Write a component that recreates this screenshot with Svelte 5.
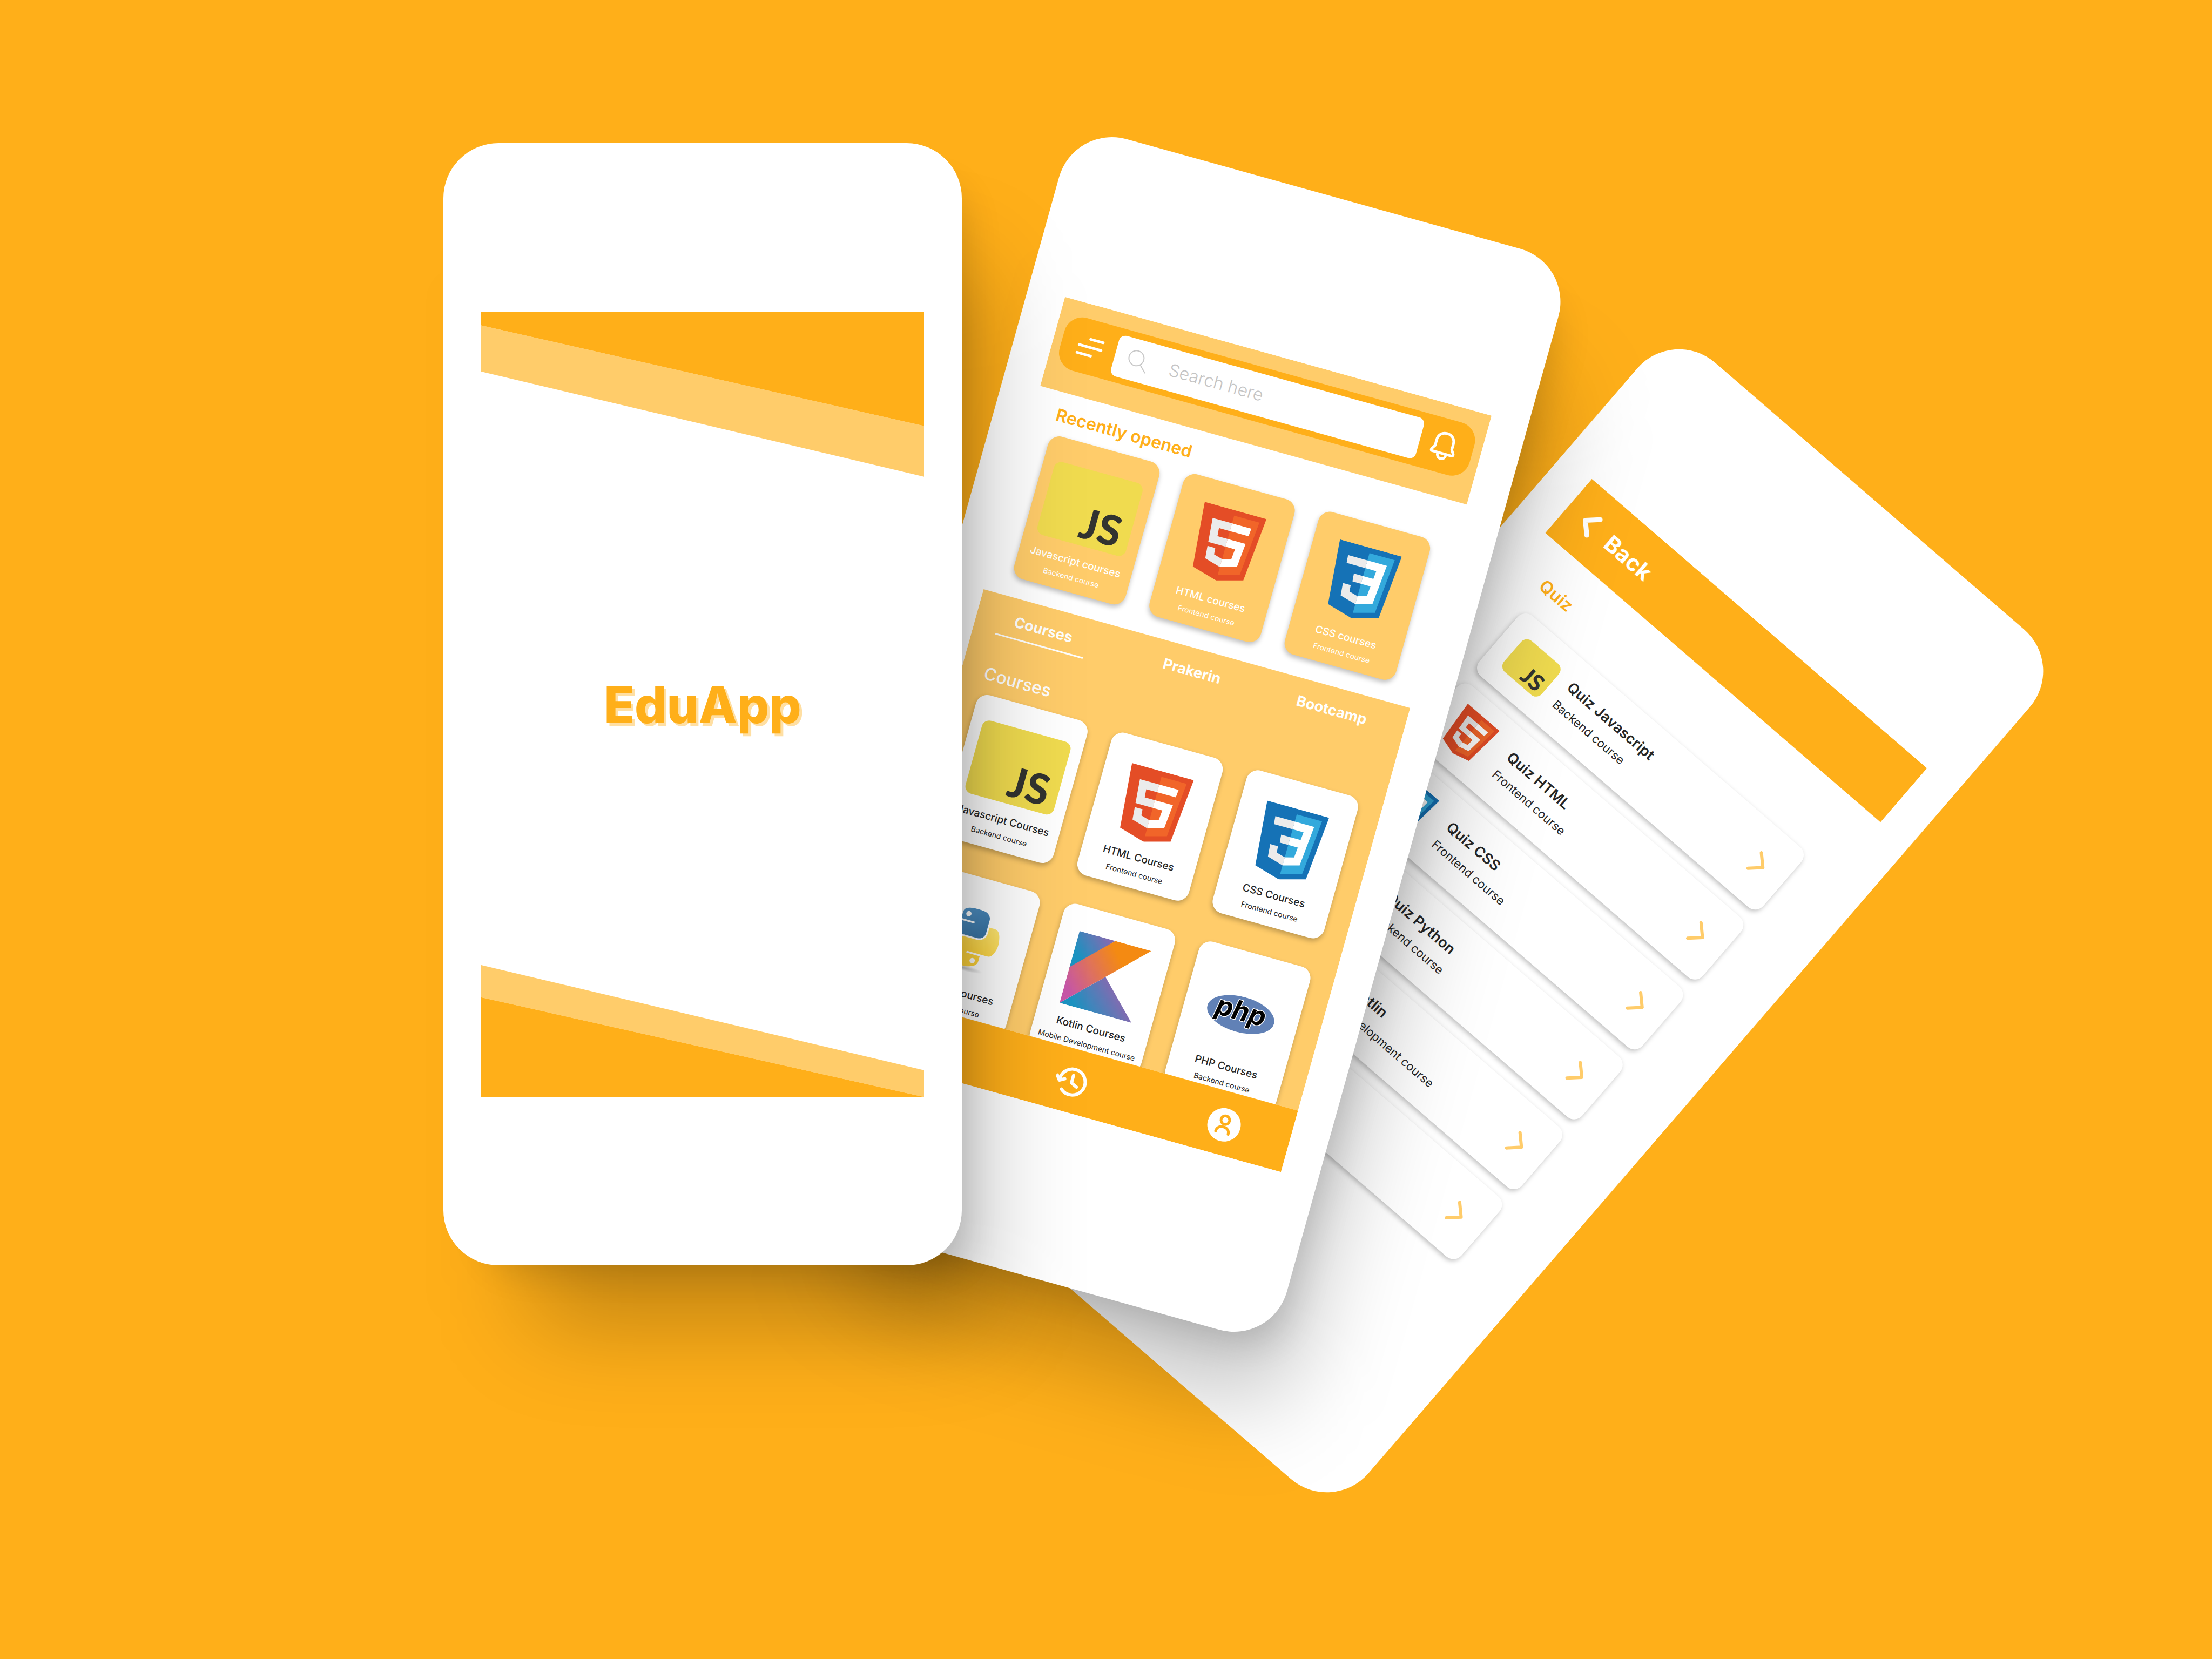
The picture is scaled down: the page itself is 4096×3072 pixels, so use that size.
<script>
  const recent = [
    { logo: 'js', title: 'Javascript courses', kind: 'Backend course' },
    { logo: 'html', title: 'HTML courses', kind: 'Frontend course' },
    { logo: 'css', title: 'CSS courses', kind: 'Frontend course' },
  ];

  const courses = [
    { logo: 'js', title: 'Javascript Courses', kind: 'Backend course' },
    { logo: 'html', title: 'HTML Courses', kind: 'Frontend course' },
    { logo: 'css', title: 'CSS Courses', kind: 'Frontend course' },
    { logo: 'python', title: 'Python Courses', kind: 'Backend course' },
    { logo: 'kotlin', title: 'Kotlin Courses', kind: 'Mobile Development course' },
    { logo: 'php', title: 'PHP Courses', kind: 'Backend course' },
  ];

  const quizzes = [
    { logo: 'js', title: 'Quiz Javascript', kind: 'Backend course' },
    { logo: 'html', title: 'Quiz HTML', kind: 'Frontend course' },
    { logo: 'css', title: 'Quiz CSS', kind: 'Frontend course' },
    { logo: 'python', title: 'Quiz Python', kind: 'Backend course' },
    { logo: 'kotlin', title: 'Quiz Kotlin', kind: 'Mobile Development course' },
    { logo: 'php', title: 'Quiz PHP', kind: 'Backend course' },
  ];

  const tabs = ['Courses', 'Prakerin', 'Bootcamp'];
  let activeTab = $state('Courses');
</script>

{#snippet logo(name)}
  {#if name === 'js'}
    <span class="logo js">JS</span>
  {:else if name === 'html'}
    <svg class="logo shield" viewBox="74 100 364 412" aria-hidden="true">
      <path fill="#e44d26" d="M107.6 470.9 74.6 100.6h362.8l-33.1 370.2L255.8 512z" />
      <path fill="#f16529" d="m256 480.5 120-33.3 28.3-316.3H256z" />
      <path fill="#ebebeb" d="M256 268.2h-60.1l-4.1-46.5H256v-45.4H142.1l1.1 12.2 11.2 125.1H256zM256 386.2l-.2.1-50.6-13.7-3.2-36.2h-45.6l6.4 71.3 93 25.8.2-.1z" />
      <path fill="#fff" d="M255.8 268.2v45.4h55.9l-5.3 58.9-50.6 13.7v47.2l93.1-25.8.7-7.6 10.7-119.6 1.1-12.2H255.8zM255.8 176.3v45.4h109.7l.9-10.2 2.1-23 1.1-12.2z" />
    </svg>
  {:else if name === 'css'}
    <svg class="logo shield" viewBox="8.7 1.3 110.6 125.4" aria-hidden="true">
      <path fill="#1572b6" d="M18.814 114.123 8.76 1.352h110.48l-10.064 112.754-45.243 12.543z" />
      <path fill="#33a9dc" d="m64.001 117.062 36.559-10.136 8.601-96.354h-45.16z" />
      <path fill="#fff" d="M64.001 51.429h18.302l1.264-14.163H64.001V23.435h34.682l-.332 3.711-3.4 38.114h-30.95z" />
      <path fill="#ebebeb" d="m64.083 87.349-.061.018-15.403-4.159-.985-11.031H33.752l1.937 21.717 28.331 7.863.063-.018z" />
      <path fill="#fff" d="m81.127 64.675-1.666 18.522-15.426 4.164v14.39l28.354-7.858.208-2.337 2.406-26.881z" />
      <path fill="#ebebeb" d="M64.048 23.435v13.831H30.64l-.277-3.108-.63-7.012-.331-3.711zm-.047 27.996v13.831H48.792l-.277-3.108-.631-7.012-.33-3.711z" />
    </svg>
  {:else if name === 'python'}
    <svg class="logo python" viewBox="0 0 112 122" aria-hidden="true">
      <defs>
        <linearGradient id="py-blue" x1="0" y1="0" x2="1" y2="1">
          <stop offset="0" stop-color="#5a9fd4" />
          <stop offset="1" stop-color="#306998" />
        </linearGradient>
        <linearGradient id="py-yellow" x1="1" y1="0" x2="0.6" y2="0.8">
          <stop offset="0" stop-color="#ffe873" />
          <stop offset="1" stop-color="#ffd43b" />
        </linearGradient>
        <radialGradient id="py-shade">
          <stop offset="0" stop-color="#000" stop-opacity="0.25" />
          <stop offset="1" stop-color="#000" stop-opacity="0" />
        </radialGradient>
      </defs>
      <ellipse cx="56" cy="116" rx="40" ry="6" fill="url(#py-shade)" />
      <path fill="url(#py-blue)" d="M54.919.001c-4.584.021-8.961.412-12.813 1.094C30.76 3.099 28.7 7.295 28.7 15.032v10.219h26.813v3.406H18.638c-7.793 0-14.616 4.684-16.75 13.594-2.462 10.213-2.571 16.586 0 27.25 1.905 7.938 6.457 13.594 14.25 13.594h9.218v-12.25c0-8.85 7.657-16.657 16.75-16.657h26.782c7.454 0 13.406-6.138 13.406-13.625V15.032c0-7.266-6.13-12.725-13.406-13.937C64.282.328 59.502-.02 54.919.001z" />
      <path fill="url(#py-yellow)" d="M85.638 28.657v11.906c0 9.231-7.826 17-16.75 17H42.106c-7.336 0-13.406 6.279-13.406 13.625V96.72c0 7.266 6.319 11.54 13.406 13.625 8.488 2.495 16.626 2.946 26.782 0 6.75-1.955 13.406-5.888 13.406-13.625V86.501H55.513v-3.406H95.7c7.792 0 10.696-5.436 13.406-13.594 2.8-8.399 2.68-16.475 0-27.25-1.926-7.758-5.604-13.594-13.406-13.594z" />
      <circle cx="40.4" cy="13.3" r="5.1" fill="#fff" />
      <circle cx="70.6" cy="98.4" r="5.1" fill="#fff" />
    </svg>
  {:else if name === 'kotlin'}
    <svg class="logo kotlin" viewBox="0 0 60 60" aria-hidden="true">
      <defs>
        <linearGradient id="kt-low" gradientUnits="userSpaceOnUse" x1="14" y1="66" x2="40" y2="40">
          <stop offset="0.1" stop-color="#1c93c1" />
          <stop offset="1" stop-color="#7f6cb1" />
        </linearGradient>
        <linearGradient id="kt-top" gradientUnits="userSpaceOnUse" x1="3" y1="18" x2="22" y2="-1">
          <stop offset="0" stop-color="#1c93c1" />
          <stop offset="1" stop-color="#7f6cb1" />
        </linearGradient>
        <linearGradient id="kt-band" gradientUnits="userSpaceOnUse" x1="-6" y1="46" x2="42" y2="4">
          <stop offset="0.1" stop-color="#c757a7" />
          <stop offset="0.45" stop-color="#dd7061" />
          <stop offset="0.85" stop-color="#f48a12" />
        </linearGradient>
      </defs>
      <path fill="url(#kt-low)" d="M0 60 30 30l30 30z" />
      <path fill="url(#kt-top)" d="M0 0h30L0 32z" />
      <path fill="url(#kt-band)" d="M30 0 0 30v30l30-30L60 0z" />
    </svg>
  {:else}
    <svg class="logo php" viewBox="0 0 128 66" role="img" aria-label="PHP logo">
      <ellipse cx="64" cy="33" rx="64" ry="33" fill="#6181b6" />
      <text x="63" y="44" text-anchor="middle">php</text>
    </svg>
  {/if}
{/snippet}

{#snippet courseCard(item)}
  <a class="card" href="#course">
    <span class="media">{@render logo(item.logo)}</span>
    <span class="title">{item.title}</span>
    <span class="kind">{item.kind}</span>
  </a>
{/snippet}

<main class="stage">
  <section class="phone quiz-phone" aria-label="Quiz list">
    <div class="screen">
      <header class="back-bar">
        <button class="back" type="button">
          <svg class="chevron" viewBox="0 0 30 48" aria-hidden="true">
            <path d="M25 5 5 24l20 19" />
          </svg>
          Back
        </button>
      </header>
      <h2 class="quiz-heading">Quiz</h2>
      <ul class="quiz-list">
        {#each quizzes as quiz}
          <li>
            <a class="quiz-card" href="#quiz">
              <span class="quiz-media">{@render logo(quiz.logo)}</span>
              <span class="quiz-text">
                <span class="quiz-title">{quiz.title}</span>
                <span class="quiz-kind">{quiz.kind}</span>
              </span>
              <svg class="chevron next" viewBox="0 0 26 44" aria-hidden="true">
                <path d="m3 3 20 19L3 41" />
              </svg>
            </a>
          </li>
        {/each}
      </ul>
    </div>
  </section>

  <section class="phone home-phone" aria-label="Home">
    <div class="screen">
      <header class="top">
        <div class="search-bar">
          <button class="icon-button menu" type="button" aria-label="Menu">
            <svg viewBox="0 0 48 36" aria-hidden="true">
              <path d="M21 3h24M3 18h42M3 33h26" />
            </svg>
          </button>
          <label class="search">
            <svg viewBox="0 0 40 40" aria-hidden="true">
              <circle cx="16" cy="16" r="14" />
              <path d="m26 26 12 12" />
            </svg>
            <input type="search" placeholder="Search here" aria-label="Search" />
          </label>
          <button class="icon-button bell" type="button" aria-label="Notifications">
            <svg viewBox="0 0 48 54" aria-hidden="true">
              <path d="M24 3C14 3 8 10 8 19v11l-4 6c-2 3-1 5 2 5h36c3 0 4-2 2-5l-4-6V19C40 10 34 3 24 3z" />
              <path d="M16 42c0 5 3 9 8 9s8-4 8-9" />
            </svg>
          </button>
        </div>
      </header>

      <section class="recent">
        <h2>Recently opened</h2>
        <div class="cards">
          {#each recent as item}
            {@render courseCard(item)}
          {/each}
        </div>
      </section>

      <section class="catalog">
        <div class="tabs" role="tablist">
          {#each tabs as tab}
            <button
              type="button"
              role="tab"
              class="tab"
              class:active={tab === activeTab}
              aria-selected={tab === activeTab}
              onclick={() => (activeTab = tab)}>{tab}</button>
          {/each}
        </div>
        <h2>Courses</h2>
        <div class="cards">
          {#each courses as item}
            {@render courseCard(item)}
          {/each}
        </div>
      </section>

      <nav class="bottom-nav">
        <button class="icon-button" type="button" aria-label="Home">
          <svg viewBox="0 0 62 62" aria-hidden="true">
            <path d="M8 30 31 9l23 21M14 26v27h34V26" />
          </svg>
        </button>
        <button class="icon-button" type="button" aria-label="History">
          <svg viewBox="0 0 62 62" aria-hidden="true">
            <path d="M8 31a24 24 0 1 1 8 17" />
            <path d="m2 25 6 8 9-5" />
            <path d="M31 18v14l11 5" />
          </svg>
        </button>
        <button class="icon-button" type="button" aria-label="Profile">
          <svg class="profile" viewBox="0 0 62 62" aria-hidden="true">
            <circle class="disc" cx="31" cy="31" r="31" />
            <circle cx="31" cy="22" r="8" />
            <path d="M19 46c0-7 5-11 12-11s12 4 12 11" />
          </svg>
        </button>
      </nav>
    </div>
  </section>

  <section class="phone splash-phone" aria-label="Welcome">
    <div class="screen splash">
      <svg class="ribbon" viewBox="0 0 960 358" preserveAspectRatio="none" aria-hidden="true">
        <path class="pale" d="M0 30v100l960 228V248z" />
        <path class="strong" d="M0 0h960v248L0 30z" />
      </svg>
      <h1>EduApp</h1>
      <svg class="ribbon" viewBox="0 0 960 286" preserveAspectRatio="none" aria-hidden="true">
        <path class="pale" d="M0 0v70l960 216v-58z" />
        <path class="strong" d="M0 70v216h960z" />
      </svg>
    </div>
  </section>
</main>

<style>
  :global(body) {
    margin: 0;
    background: #ffaf19;
  }

  .stage {
    --orange: #ffaf19;
    --pale: #ffcc6a;
    --ink: #262626;
    position: relative;
    min-height: 100vh;
    overflow: hidden;
    background: var(--orange);
    color: var(--ink);
    font-family: Inter, "Liberation Sans", sans-serif;
  }

  h1,
  h2,
  ul {
    margin: 0;
    padding: 0;
  }

  ul {
    list-style: none;
  }

  a {
    color: inherit;
    text-decoration: none;
  }

  button {
    padding: 0;
    border: 0;
    background: none;
    color: inherit;
    font: inherit;
  }

  svg {
    display: block;
    fill: none;
    stroke-linecap: round;
    stroke-linejoin: round;
  }

  .phone {
    position: absolute;
    isolation: isolate;
    box-sizing: border-box;
    width: 960px;
    padding: 312px 70px;
  }

  .phone::after {
    content: "";
    position: absolute;
    inset: 0;
    z-index: -1;
    border-radius: 102px;
    background: #fff;
  }

  .screen {
    display: flex;
    flex-direction: column;
    height: 1454px;
    overflow: hidden;
  }

  .quiz-phone {
    left: 2303px;
    top: 666px;
    transform: rotate(40.8deg);
  }

  .home-phone {
    left: 1692px;
    top: 321px;
    transform: rotate(15.56deg);
  }

  .splash-phone {
    left: 821px;
    top: 265px;
  }

  .home-phone::after,
  .splash-phone::after {
    box-shadow: 44px 44px 70px -40px rgba(0, 0, 0, 0.16);
  }

  /* Wide soft shadow that falls down and to the right */
  .home-phone::before,
  .splash-phone::before {
    content: "";
    position: absolute;
    inset: 230px -40px -110px 160px;
    z-index: -2;
    border-radius: 60px;
    background: rgba(0, 0, 0, 0.24);
    filter: blur(90px);
  }

  /* Splash */
  .splash {
    justify-content: space-between;
    align-items: center;
  }

  .ribbon {
    width: 100%;
  }

  .pale {
    fill: var(--pale);
  }

  .strong {
    fill: var(--orange);
  }

  h1 {
    margin-bottom: 60px;
    color: var(--orange);
    font-size: 93px;
    font-weight: 800;
    line-height: 120px;
    text-shadow: 5px 5px 0 #ffdfa3;
  }

  /* Home */
  .top {
    flex: none;
    box-sizing: border-box;
    height: 171px;
    padding: 27px 16px;
    background: var(--pale);
  }

  .search-bar {
    display: flex;
    align-items: center;
    box-sizing: border-box;
    height: 101px;
    padding: 0 30px;
    border-radius: 34px;
    background: var(--orange);
  }

  .icon-button {
    display: grid;
    flex: none;
    place-items: center;
  }

  .icon-button svg {
    stroke: #fff;
  }

  .menu svg {
    width: 48px;
    height: 36px;
    stroke-width: 5;
  }

  .bell svg {
    width: 48px;
    height: 54px;
    stroke-width: 5;
  }

  .search {
    display: flex;
    flex: 1;
    align-items: center;
    gap: 40px;
    box-sizing: border-box;
    min-width: 0;
    height: 78px;
    margin: 0 22px 0 24px;
    padding: 0 24px;
    border-radius: 12px;
    background: #fff;
  }

  .search svg {
    flex: none;
    width: 40px;
    height: 40px;
    stroke: #c8c8c8;
    stroke-width: 2;
  }

  input {
    flex: 1;
    width: 100%;
    min-width: 0;
    padding: 0;
    border: 0;
    outline: 0;
    background: none;
    color: var(--ink);
    font: 300 32px/40px Inter, "Liberation Sans", sans-serif;
  }

  input::placeholder {
    color: #c4c4c4;
    opacity: 1;
  }

  .recent {
    flex: none;
    padding: 6px 43px 37px;
  }

  h2 {
    font-size: 32px;
    font-weight: 500;
    line-height: 74px;
  }

  .recent h2,
  .quiz-heading {
    color: var(--orange);
    font-weight: 600;
  }

  .cards {
    display: grid;
    grid-template-columns: repeat(3, 214px);
    justify-content: space-between;
    gap: 55px 0;
  }

  .card {
    display: flex;
    flex-direction: column;
    align-items: center;
    box-sizing: border-box;
    height: 274px;
    padding-top: 45px;
    border-radius: 22px;
    background: #fff;
    box-shadow: 0 5px 10px rgba(0, 0, 0, 0.25);
    white-space: nowrap;
  }

  .recent .card {
    background: var(--pale);
    color: #fff;
  }

  .media {
    display: flex;
    align-items: flex-start;
    height: 158px;
  }

  .title {
    font-size: 19px;
    font-weight: 500;
    line-height: 28px;
  }

  .kind {
    font-size: 14px;
    line-height: 32px;
  }

  .js {
    display: flex;
    align-items: flex-end;
    justify-content: flex-end;
    box-sizing: border-box;
    width: 170px;
    height: 140px;
    padding: 0 18px 2px 0;
    border-radius: 14px;
    background: #f0db4f;
    color: #323330;
    font: 900 78px/84px Lato, sans-serif;
  }

  .shield {
    width: 119px;
    height: 135px;
  }

  .catalog .shield {
    margin-top: 5px;
  }

  .python {
    width: 108px;
    height: 118px;
    margin-top: 13px;
  }

  .kotlin {
    width: 138px;
    height: 138px;
    margin-top: 2px;
  }

  .php {
    width: 128px;
    height: 66px;
    margin-top: 38px;
  }

  .php text {
    fill: #000;
    stroke: #fff;
    stroke-width: 3;
    paint-order: stroke;
    font: italic 700 50px Inter, sans-serif;
  }

  .catalog {
    flex: 1;
    min-height: 0;
    padding: 13px 43px 0;
    overflow: hidden;
    background: var(--pale);
  }

  .tabs {
    display: flex;
    justify-content: space-between;
    padding-right: 29px;
    color: #fff;
  }

  .tab {
    box-sizing: border-box;
    height: 62px;
    border-bottom: 3px solid transparent;
    font-size: 27px;
    font-weight: 700;
  }

  .tab.active {
    width: 168px;
    border-color: #fff;
  }

  .catalog h2 {
    padding-top: 36px;
    color: #fff;
    line-height: 75px;
  }

  .bottom-nav {
    display: flex;
    flex: none;
    align-items: center;
    justify-content: space-between;
    box-sizing: border-box;
    height: 118px;
    padding: 6px 94px 0 78px;
    background: var(--orange);
  }

  .bottom-nav svg {
    width: 62px;
    height: 62px;
    stroke-width: 6;
  }

  .bottom-nav .profile {
    stroke: var(--orange);
    stroke-width: 5;
  }

  .bottom-nav .disc {
    fill: #fff;
    stroke: none;
  }

  /* Quiz */
  .back-bar {
    display: flex;
    flex: none;
    align-items: center;
    height: 132px;
    padding-left: 36px;
    background: var(--orange);
    color: #fff;
  }

  .back {
    display: flex;
    align-items: center;
    gap: 30px;
    font-size: 42px;
    font-weight: 700;
  }

  .chevron {
    width: 30px;
    height: 48px;
    stroke: #fff;
    stroke-width: 9;
  }

  .next {
    width: 26px;
    height: 44px;
    margin-left: auto;
    stroke: var(--pale);
    stroke-width: 6;
  }

  .quiz-heading {
    padding: 38px 56px 20px;
  }

  .quiz-list {
    display: grid;
    gap: 24px;
    padding: 0 63px;
  }

  .quiz-card {
    display: flex;
    align-items: center;
    box-sizing: border-box;
    height: 147px;
    padding: 0 44px 0 35px;
    border-radius: 20px;
    background: #fff;
    box-shadow: 0 4px 10px rgba(0, 0, 0, 0.25);
  }

  .quiz-media {
    display: flex;
    width: 120px;
  }

  .quiz-media .js {
    width: 92px;
    height: 76px;
    padding: 0 10px 0 0;
    border-radius: 14px;
    font-size: 42px;
    line-height: 48px;
  }

  .quiz-media .shield {
    width: 78px;
    height: 88px;
  }

  .quiz-media .python,
  .quiz-media .kotlin,
  .quiz-media .php {
    width: 78px;
    height: 78px;
    margin: 0;
  }

  .quiz-text {
    display: flex;
    flex-direction: column;
    line-height: 43px;
    white-space: nowrap;
  }

  .quiz-title {
    font-size: 27px;
    font-weight: 600;
  }

  .quiz-kind {
    font-size: 22px;
    font-weight: 400;
  }
</style>
